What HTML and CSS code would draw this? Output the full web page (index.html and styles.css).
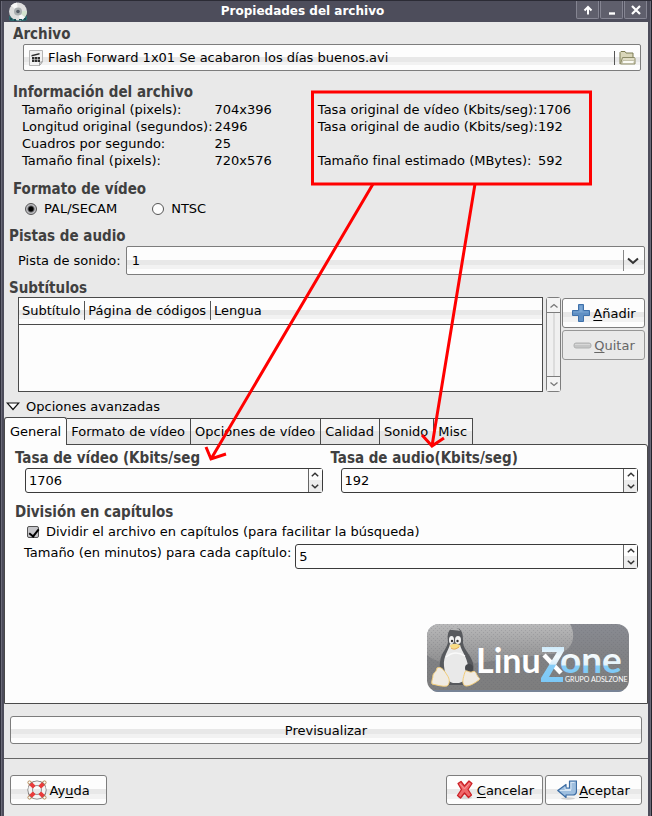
FILE: index.html
```html
<!DOCTYPE html>
<html lang="es">
<head>
<meta charset="utf-8">
<meta name="viewport" content="width=device-width, initial-scale=1">
<title>Propiedades del archivo</title>
<link rel="stylesheet" href="styles.css">
</head>
<body>
<div class="window">
  <header class="titlebar">
    <svg class="disc" width="22" height="20" viewBox="0 0 22 20" aria-hidden="true">
      <path d="M2 14h18v4l-2 1H4l-2-1z" fill="#2d686d"/>
      <circle cx="11" cy="9.500" r="9" fill="#dedede"/>
      <path d="M11 9.500 4 3.500A9 9 0 0 1 10 .5z" fill="#f8f8f8"/>
      <path d="M11 9.500 18 15.500A9 9 0 0 1 13 18.500z" fill="#f6f6f6"/>
      <path d="M11 9.500 20 9A9 9 0 0 1 18 15z" fill="#d3e2cd"/>
      <circle cx="11" cy="9.500" r="4" fill="#a9aeb0"/>
      <circle cx="11" cy="9.500" r="1.800" fill="#555c66"/>
      <path d="M3 16h2v2H3zM7 17h2v2H7zM12 17h3v1h-3zM17 16h2v2h-2z" fill="#1c5056"/>
    </svg>
    <h1>Propiedades del archivo</h1>
    <div class="wm">
      <button type="button" aria-label="Maximizar"><svg width="10" height="10" viewBox="0 0 10 10"><path d="M5 9.500V2M1.500 5.500 5 2l3.500 3.500" fill="none" stroke="#fff" stroke-width="2"/></svg></button>
      <button type="button" aria-label="Minimizar"><svg width="10" height="10" viewBox="0 0 10 10"><path d="M2 8.500h6" stroke="#fff" stroke-width="2.400"/></svg></button>
      <button type="button" aria-label="Cerrar"><svg width="10" height="10" viewBox="0 0 10 10"><path d="m1 1 8 8M9 1 1 9" stroke="#fff" stroke-width="2.200"/></svg></button>
    </div>
  </header>

  <main class="content">
    <section class="inset file">
      <h2>Archivo</h2>
      <button type="button" class="chooser">
        <svg width="14" height="16" viewBox="0 0 14 16" aria-hidden="true">
          <path d="M.5.500h13v11l-3 4H.500z" fill="#f2f2f2" stroke="#b5b5b5"/>
          <path d="m13.500 11.500-3 4v-3z" fill="#fff" stroke="#a0a0a0"/>
          <path d="m2.500 5 8-2v1.500l-8 2zM3 7h8v5H3z" fill="#2e2e2e"/>
          <path d="M3 9.500h8M5.500 7v5M8.500 7v5" stroke="#eee" stroke-width=".5"/>
        </svg>
        <span class="name">Flash Forward 1x01 Se acabaron los días buenos.avi</span>
        <span class="folder"><svg width="17" height="14" viewBox="0 0 17 14" aria-hidden="true">
          <path d="M1 13V1.500l1-1h4l1 1.500h7v4" fill="#d9d6b9" stroke="#7d7c55"/>
          <path d="M3.500 6.500h12l.5 1v5.500H1.500z" fill="#e0ddc5" stroke="#8c8b67"/>
          <path d="M4 9.500h11.500l-1 3H3z" fill="#fbfbf5" stroke="#a9a88c" stroke-width=".6"/>
        </svg></span>
      </button>
    </section>

    <section class="inset info">
      <h2>Información del archivo</h2>
      <div class="facts">
        <dl>
          <dt>Tamaño original (pixels):</dt><dd>704x396</dd>
          <dt>Longitud original (segundos):</dt><dd>2496</dd>
          <dt>Cuadros por segundo:</dt><dd>25</dd>
          <dt>Tamaño final (pixels):</dt><dd>720x576</dd>
        </dl>
        <dl class="rates">
          <dt>Tasa original de vídeo (Kbits/seg):</dt><dd>1706</dd>
          <dt>Tasa original de audio (Kbits/seg):</dt><dd>192</dd>
          <dt class="apart">Tamaño final estimado (MBytes):</dt><dd class="apart">592</dd>
        </dl>
      </div>
    </section>

    <section class="inset format">
      <h2>Formato de vídeo</h2>
      <div class="radios">
        <label><input type="radio" name="tv" checked>PAL/SECAM</label>
        <label><input type="radio" name="tv">NTSC</label>
      </div>
    </section>

    <section class="audio">
      <h2>Pistas de audio</h2>
      <div class="track">
        <label for="track">Pista de sonido:</label>
        <div class="combo">
          <select id="track"><option>1</option></select>
          <svg width="12" height="8" viewBox="0 0 12 8" aria-hidden="true"><path d="m1 1.500 5 4.500 5-4.500" fill="none" stroke="#333" stroke-width="2"/></svg>
        </div>
      </div>
    </section>

    <section class="subs">
      <h2>Subtítulos</h2>
      <div class="subrow">
        <div class="list">
          <table>
            <thead><tr><th><span>Subtítulo</span></th><th><span>Página de códigos</span></th><th class="last"><span>Lengua</span></th></tr></thead>
            <tbody></tbody>
          </table>
        </div>
        <div class="scroll">
          <button type="button" aria-label="Subir"><svg width="8" height="5" viewBox="0 0 8 5"><path d="m.5 4.500 3.500-3 3.500 3" fill="none" stroke="#777" stroke-width="1.300"/></svg></button>
          <div class="trough"></div>
          <button type="button" aria-label="Bajar"><svg width="8" height="5" viewBox="0 0 8 5"><path d="m.5.500 3.500 3 3.500-3" fill="none" stroke="#777" stroke-width="1.300"/></svg></button>
        </div>
        <div class="side">
          <button type="button" class="btn"><svg width="20" height="20" viewBox="0 0 20 20" aria-hidden="true"><path d="M7.500 1.500h5v6h6v5h-6v6h-5v-6h-6v-5h6z" fill="#5f8fc3" stroke="#3e70aa"/><path d="M8.500 2.500h3v6h6v1H2.500v-1h6z" fill="#7ba6d3"/></svg><span><u>A</u>ñadir</span></button>
          <button type="button" class="btn" disabled><svg width="20" height="20" viewBox="0 0 20 20" aria-hidden="true"><rect x="2" y="8" width="17" height="5" rx="2" fill="#c4c5c5" stroke="#b2b3b3"/><path d="M3 9.500h15" stroke="#d8d8d8"/></svg><span><u>Q</u>uitar</span></button>
        </div>
      </div>
    </section>

    <section class="advanced">
      <button type="button" class="expander" aria-expanded="true"><svg width="14" height="9" viewBox="0 0 14 9" aria-hidden="true"><path d="M1.200 1h11.600L7 7.500z" fill="#fff" stroke="#111" stroke-width="1.200"/></svg>Opciones avanzadas</button>
      <div class="tabs" role="tablist">
        <button type="button" role="tab" aria-selected="true">General</button>
        <button type="button" role="tab" aria-selected="false">Formato de vídeo</button>
        <button type="button" role="tab" aria-selected="false">Opciones de vídeo</button>
        <button type="button" role="tab" aria-selected="false">Calidad</button>
        <button type="button" role="tab" aria-selected="false">Sonido</button>
        <button type="button" role="tab" aria-selected="false">Misc</button>
      </div>
      <div class="panel" role="tabpanel">
        <div class="bitrates">
          <div>
            <h2><label for="vrate">Tasa de vídeo (Kbits/seg</label></h2>
            <div class="spin"><input id="vrate" type="number" value="1706"><div class="steps"><button type="button" aria-label="Aumentar"><svg width="8" height="5" viewBox="0 0 8 5"><path d="m.8 4.300 3.200-3 3.200 3" fill="none" stroke="#333" stroke-width="1.500"/></svg></button><button type="button" aria-label="Disminuir"><svg width="8" height="5" viewBox="0 0 8 5"><path d="m.8.700 3.200 3 3.200-3" fill="none" stroke="#333" stroke-width="1.500"/></svg></button></div></div>
          </div>
          <div>
            <h2><label for="arate">Tasa de audio(Kbits/seg)</label></h2>
            <div class="spin"><input id="arate" type="number" value="192"><div class="steps"><button type="button" aria-label="Aumentar"><svg width="8" height="5" viewBox="0 0 8 5"><path d="m.8 4.300 3.200-3 3.200 3" fill="none" stroke="#333" stroke-width="1.500"/></svg></button><button type="button" aria-label="Disminuir"><svg width="8" height="5" viewBox="0 0 8 5"><path d="m.8.700 3.200 3 3.200-3" fill="none" stroke="#333" stroke-width="1.500"/></svg></button></div></div>
          </div>
        </div>
        <h2>División en capítulos</h2>
        <label class="check"><input type="checkbox" checked>Dividir el archivo en capítulos (para facilitar la búsqueda)</label>
        <div class="chapter">
          <label for="mins">Tamaño (en minutos) para cada capítulo:</label>
          <div class="spin"><input id="mins" type="number" value="5"><div class="steps"><button type="button" aria-label="Aumentar"><svg width="8" height="5" viewBox="0 0 8 5"><path d="m.8 4.300 3.200-3 3.200 3" fill="none" stroke="#333" stroke-width="1.500"/></svg></button><button type="button" aria-label="Disminuir"><svg width="8" height="5" viewBox="0 0 8 5"><path d="m.8.700 3.200 3 3.200-3" fill="none" stroke="#333" stroke-width="1.500"/></svg></button></div></div>
        </div>
        <svg class="logo" width="202" height="68" viewBox="0 0 202 68" role="img" aria-label="LinuxZone, Grupo ADSLZone">
          <defs>
            <linearGradient id="plate" x1="0" y1="0" x2="0" y2="1"><stop offset="0" stop-color="#898b92"/><stop offset=".5" stop-color="#808184"/><stop offset="1" stop-color="#7d7d7d"/></linearGradient>
            <linearGradient id="gloss" x1="0" y1="0" x2="0" y2="1"><stop offset="0" stop-color="#b9b9ba"/><stop offset="1" stop-color="#8d8d8e"/></linearGradient>
            <linearGradient id="sky" gradientUnits="userSpaceOnUse" x1="0" y1="22" x2="0" y2="58"><stop offset="0" stop-color="#c9e8fa"/><stop offset=".3" stop-color="#f4fafd"/><stop offset=".5" stop-color="#d9edf8"/><stop offset=".54" stop-color="#86cdf7"/><stop offset="1" stop-color="#7cc8f6"/></linearGradient>
            <linearGradient id="sky2" gradientUnits="userSpaceOnUse" x1="0" y1="31" x2="0" y2="51"><stop offset="0" stop-color="#f4fafd"/><stop offset=".5" stop-color="#e3f2fa"/><stop offset=".55" stop-color="#84cdf8"/><stop offset="1" stop-color="#7cc8f6"/></linearGradient>
            <pattern id="weave" width="4" height="4" patternUnits="userSpaceOnUse"><path d="M0 0h1v1H0zM2 2h1v1H2z" fill="#5e6068" opacity=".22"/></pattern>
            <clipPath id="round"><rect width="202" height="68" rx="12"/></clipPath>
          </defs>
          <g clip-path="url(#round)">
            <rect width="202" height="68" fill="url(#plate)"/>
            <path d="M0 0h143c7 12 2 27-10 29C88 34 70 36 50 39 30 41 10 40 0 31z" fill="url(#gloss)"/>
            <rect width="202" height="68" fill="url(#weave)"/>
            <path d="M0 67h202" stroke="#778396" stroke-width="2"/>
          </g>
          <path d="M28 4c-7 0-8 7-7 13 0 7-7 11-8 21-1 8 1 20 8 23h15c8-3 12-11 10-22-2-8-9-13-10-20 0-8 0-15-8-15z" fill="#57595d"/>
          <path d="M23 6c3-3 8-3 10 1-3-1-7-1-10-1z" fill="#b5b5b6"/>
          <path d="M23 20c-1 6-7 12-6 22 1 8 3 16 9 17h6c8-2 10-9 9-17-1-9-6-14-8-21z" fill="#e9e9e9"/>
          <path d="M19 33c6-5 13-5 19-1" fill="none" stroke="#fafafa" stroke-width="1.500"/>
          <ellipse cx="24.500" cy="16" rx="2.500" ry="4" fill="#f3f3f3"/><ellipse cx="31" cy="16" rx="3" ry="4" fill="#f3f3f3"/>
          <circle cx="25" cy="17" r="1.200" fill="#333"/><circle cx="30.500" cy="17" r="1.200" fill="#333"/>
          <path d="M22.500 22c3-3 8-3 11 0-3 3-8 4-11 0z" fill="#f7dc86"/><path d="M24 24c3 2 5 1 8-1" fill="none" stroke="#e5a94e"/>
          <circle cx="42" cy="44" r="4" fill="#47494d"/>
          <path d="M10 44c4-2 7 2 10 7 3 4 3 9 0 11-4 1-10-1-15-2-1-3 1-5 1-9 1-3 3-2 4-7z" fill="#f0ebe2" stroke="#f3cd78"/>
          <path d="M38 48c1-3 4 1 7 0 3-2 4 1 5 3 1 3 4 3 2 5-4 3-9 6-13 6-5-1-3-8-1-14z" fill="#f0ebe2" stroke="#f3cd78"/>
          <path d="M117 31 134 49" fill="none" stroke="#fff" stroke-width="4.500"/>
          <g class="logotext">
            <text x="49" y="49" font-size="34" fill="#fff">Linu</text>
            <text x="133" y="49" font-size="37" fill="url(#sky2)">one</text>
            <text class="group" x="138" y="58" font-size="7" fill="#fff">GRUPO ADSLZONE</text>
          </g>
          <path d="M115 23h22v4L122 53h14v5h-22v-4L130 28h-15z" fill="url(#sky)"/>
        </svg>
      </div>
    </section>

    <div class="preview"><button type="button" class="btn">Previsualizar</button></div>

    <footer class="actions">
      <button type="button" class="btn help"><svg width="20" height="20" viewBox="0 0 20 20" aria-hidden="true">
        <path d="M2.500 2.500h15v15h-15z" fill="none" stroke="#b48a56" stroke-width="1.500"/>
        <circle cx="2.500" cy="2.500" r="1.600" fill="#fff" stroke="#b48a56"/><circle cx="17.500" cy="2.500" r="1.600" fill="#fff" stroke="#b48a56"/><circle cx="2.500" cy="17.500" r="1.600" fill="#fff" stroke="#b48a56"/><circle cx="17.500" cy="17.500" r="1.600" fill="#fff" stroke="#b48a56"/>
        <circle cx="10" cy="10" r="6.800" fill="none" stroke="#777" stroke-width="5.600"/>
        <circle cx="10" cy="10" r="6.800" fill="none" stroke="#f4f4f4" stroke-width="4"/>
        <path d="m3.600 3.600 3.600 3.600M16.400 3.600l-3.600 3.600M3.600 16.400l3.600-3.600M16.400 16.400l-3.600-3.600" stroke="#ea3b3b" stroke-width="4"/>
      </svg><span>Ay<u>u</u>da</span></button>
      <button type="button" class="btn"><svg width="20" height="20" viewBox="0 0 20 20" aria-hidden="true">
        <ellipse cx="10" cy="17.500" rx="7" ry="1.800" fill="#d8d8d8"/>
        <path d="M3 3.500 6 1.500 9.500 6 14 1l3 2.500-4 6 3.500 5.500-3 2.500L9.500 13 5.500 18 2.500 15.500 6.500 9.500z" fill="#f0676a" stroke="#cb2026" stroke-width="1.300" stroke-linejoin="round"/>
        <path d="m5 4 4.500 5L14.500 3" fill="none" stroke="#f79a9a"/>
      </svg><span><u>C</u>ancelar</span></button>
      <button type="button" class="btn"><svg width="20" height="20" viewBox="0 0 20 20" aria-hidden="true">
        <ellipse cx="11" cy="18.500" rx="7" ry="1.200" fill="#cfcfcf"/>
        <path d="M12.500 1h7v10c0 3-2 4-4 4H9v2.500L.8 10.500 9 4.500V8h3.500z" fill="#9fbfdf" stroke="#3b6ca3" stroke-width="1.200" stroke-linejoin="round"/>
        <path d="M13.500 2.500h4M8 7v2.500h6V3M3 10.500h11" fill="none" stroke="#d6e5f3"/>
      </svg><span><u>A</u>ceptar</span></button>
    </footer>
  </main>

  <svg class="notes" width="652" height="480" viewBox="0 0 652 480" aria-hidden="true">
    <g fill="none" stroke="#f00" stroke-width="3">
      <rect x="312.500" y="91" width="278" height="92"/>
      <path d="M373 183 211 458M206 446l5 12 15-5M475 183 432 445M422 434l10 11 12-8"/>
    </g>
  </svg>
</div>
</body>
</html>
```
FILE: styles.css
```css
:root {
  --face: #e9e9e9;
  --line: #7d7d7d;
  --dark: #4d4d5b;
  --sheen: linear-gradient(#fdfdfd 0 48%, #e8e8e8 48% 66%, #f2f2f2 66% 82%, #fdfdfd 82%);
}

* { box-sizing: border-box; }

body {
  margin: 0;
  background: var(--dark);
  color: #000;
  font: 13px/17px "DejaVu Sans", sans-serif;
}

button, input, select { font: inherit; color: inherit; margin: 0; padding: 0; }
h1, h2, dl, dd { margin: 0; }
svg { display: block; flex: none; }

h2 {
  font: bold 15px/17px "DejaVu Sans Condensed", "DejaVu Sans", sans-serif;
  color: #404040;
}

.window {
  position: relative;
  display: flex;
  flex-direction: column;
  min-height: 100vh;
  padding: 0 4px;
  border-top: 1px solid #2b2b35;
  background: linear-gradient(90deg, #30303c 0 1px, #6a6a78 1px 2px, var(--dark) 2px calc(100% - 2px), #6a6a78 calc(100% - 2px) calc(100% - 1px), #23232c calc(100% - 1px));
}

.titlebar {
  display: flex;
  align-items: center;
  height: 21px;
  padding-left: 3px;
  color: #fff;
}
.titlebar h1 { flex: 1; font-size: 12px; line-height: 17px; text-align: center; }
.wm { display: flex; align-self: flex-start; gap: 1px; padding-right: 1px; }
.wm button {
  display: grid;
  place-items: center;
  width: 23px;
  height: 18px;
  border: 1px solid #858592;
  border-top: 0;
  border-radius: 0 0 2px 2px;
  background: #5f5f6c;
}

.content { flex: 1; background: var(--face); padding-top: 4px; }
.inset { padding: 0 7px 0 9px; }

.chooser {
  display: flex;
  align-items: center;
  gap: 5px;
  width: calc(100% - 10px);
  height: 27px;
  margin: 1px 0 0 10px;
  padding: 0 4px 0 5px;
  border: 1px solid var(--line);
  border-radius: 2px;
  background: var(--sheen);
}
.name { flex: 1; text-align: left; white-space: nowrap; }
.folder { padding-left: 4px; border-left: 1px solid #555; }

.info { padding-top: 13px; }
.facts { display: flex; gap: 46px; padding-left: 9px; }
.facts dl { display: grid; grid-template-columns: auto auto; column-gap: 2px; align-content: start; white-space: nowrap; }
.facts .rates { column-gap: 0; }
.apart { margin-top: 17px; }

.format { padding-top: 12px; }
.radios { display: flex; gap: 35px; padding: 2px 0 0 12px; }
.radios label, .check { display: flex; align-items: center; }
.radios label { gap: 7px; }
.radios input {
  appearance: none;
  width: 12px;
  height: 12px;
  border: 1px solid #555;
  border-radius: 50%;
  background: #fdfdfd;
}
.radios input:checked { background: radial-gradient(circle, #000 0 2px, #bdbdc1 4px); }

.audio { padding: 11px 3px 0 5px; }
.track { display: flex; align-items: center; gap: 5px; padding: 1px 0 0 9px; }
.combo { position: relative; flex: 1; }
.combo select {
  appearance: none;
  display: block;
  width: 100%;
  height: 29px;
  padding: 0 5px;
  border: 1px solid var(--line);
  border-radius: 2px;
  background: linear-gradient(#888, #888) right 20px center / 1px 21px no-repeat, var(--sheen);
}
.combo svg { position: absolute; right: 6px; top: 11px; pointer-events: none; }

.subs { padding: 5px 3px 0 5px; }
.subrow { display: flex; padding: 0 0 0 9px; }
.list { flex: 1; height: 95px; border: 1px solid #4a4a4a; background: #fdfdfd; }
.list table { width: 100%; border-collapse: collapse; }
.list thead { background: var(--sheen); }
.list th { height: 26px; padding: 0; border-bottom: 1px solid #4a4a4a; font-weight: normal; text-align: left; white-space: nowrap; }
.list th span { display: block; padding: 1px 4px 1px 3px; border-right: 1px solid #555; }
.list th.last { width: 100%; }
.list th.last span { border: 0; }

.scroll { display: flex; flex-direction: column; width: 15px; margin: 0 1px 0 3px; border: 1px solid var(--line); border-radius: 3px; background: #f0f0f0; }
.scroll button { display: grid; place-items: center; height: 14px; border: 0; background: #f4f4f4; }
.trough { flex: 1; border: solid var(--line); border-width: 1px 0; background: linear-gradient(90deg, #f0f0f0 0 6px, #dcdcdc 6px 8px, #f0f0f0 8px); }

.btn {
  display: flex;
  align-items: center;
  justify-content: center;
  gap: 2px;
  height: 30px;
  border: 1px solid var(--line);
  border-radius: 3px;
  background: var(--sheen);
}
.btn u { text-underline-offset: 2px; }
.btn:disabled { color: #666; background: #e9e9e9; border-color: #969696; }
.side { display: flex; flex-direction: column; gap: 2px; width: 83px; padding-top: 1px; }

.advanced { padding-top: 6px; }
.expander { display: flex; align-items: center; gap: 6px; padding: 0 0 0 2px; border: 0; background: none; }

.tabs { display: flex; align-items: flex-end; height: 29px; }
.tabs button {
  height: 26px;
  padding: 0 5px 0 4px;
  border: 1px solid #4a4a4a;
  border-left: 0;
  border-bottom: 0;
  background: linear-gradient(#f6f6f6 0 48%, #e6e6e6 48%);
  white-space: nowrap;
}
.tabs [aria-selected="true"] { height: 28px; padding: 0 5px; border-left: 1px solid #4a4a4a; border-radius: 3px 3px 0 0; background: #fdfdfd; margin-bottom: -1px; z-index: 1; }
.panel {
  display: flex;
  flex-direction: column;
  min-height: 260px;
  padding: 5px 9px 11px 10px;
  border: 1px solid #4a4a4a;
  border-top-right-radius: 3px;
  background: #fdfdfd;
}
.bitrates { display: grid; grid-template-columns: 1fr 1fr; gap: 8px; padding-bottom: 11px; }
.bitrates .spin { margin: 1px 0 0 10px; }
.spin { display: flex; flex: 1; height: 25px; border: 1px solid #3b3b3b; border-radius: 3px; }
.spin input { appearance: textfield; flex: 1; min-width: 0; padding: 0 3px; border: 0; background: none; }
.spin input::-webkit-inner-spin-button { appearance: none; }
.steps { display: flex; flex-direction: column; width: 14px; border-left: 1px solid #666; background: linear-gradient(#fdfdfd 50%, #ececec 50%); }
.steps button { flex: 1; display: grid; place-items: center; border: 0; background: none; }
.check { gap: 7px; padding: 2px 0 0 12px; }
.check input {
  appearance: none;
  position: relative;
  width: 12px;
  height: 12px;
  border: 1px solid #555;
  border-radius: 2px;
  background: #c6c6ca;
}
.check input:checked::after {
  content: "";
  position: absolute;
  left: 3px;
  top: 0;
  width: 4px;
  height: 8px;
  border: solid #000;
  border-width: 0 2px 2px 0;
  transform: rotate(38deg);
}
.chapter { display: flex; gap: 4px; padding: 4px 0 0 9px; }
.logo { margin: auto 9px 0 0; align-self: flex-end; }
.logotext { font-family: Lato, "Open Sans", sans-serif; font-weight: bold; }
.group { font-weight: normal; }

.preview { padding: 12px 6px 14px; border-bottom: 1px solid #666; }
.preview .btn { width: 100%; height: 28px; }

.actions { display: flex; gap: 2px; padding: 16px 6px 11px; }
.actions .btn { width: 97px; }
.actions .help { margin-right: auto; }

.notes { position: absolute; left: 0; top: 0; pointer-events: none; }
```
